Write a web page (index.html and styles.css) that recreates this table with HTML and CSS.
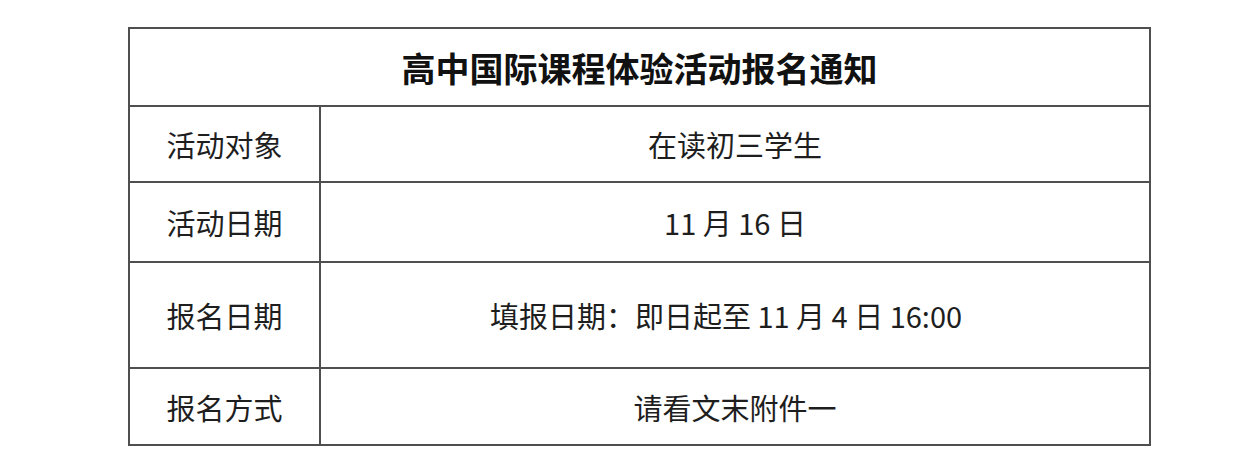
FILE: index.html
```html
<!DOCTYPE html>
<html lang="zh-CN">
<head>
<meta charset="utf-8">
<link rel="stylesheet" href="styles.css">
</head>
<body>
<table class="notice">
  <colgroup><col class="col-label"><col class="col-value"></colgroup>
  <tr class="row-title"><th colspan="2" class="title">高中国际课程体验活动报名通知</th></tr>
  <tr class="row-a"><td class="label">活动对象</td><td class="value">在读初三学生</td></tr>
  <tr class="row-b"><td class="label">活动日期</td><td class="value">11 月 16 日</td></tr>
  <tr class="row-c"><td class="label">报名日期</td><td class="value value-shift">填报日期：即日起至 11 月 4 日 16:00</td></tr>
  <tr class="row-d"><td class="label">报名方式</td><td class="value">请看文末附件一</td></tr>
</table>
</body>
</html>
```

FILE: styles.css
```css
html, body {
  margin: 0;
  padding: 0;
  background: #ffffff;
}
body {
  padding: 27px 0 0 128px;
  font-family: "Noto Sans CJK SC", "Noto Sans", sans-serif;
  color: #1e1e1e;
}
.notice {
  border-collapse: collapse;
  width: 1023px;
  table-layout: fixed;
}
.col-label { width: 191px; }
.notice th, .notice td {
  border: 2px solid #4f4f4f;
  padding: 0;
  text-align: center;
  vertical-align: middle;
}
.title {
  font-size: 34px;
  font-weight: 700;
  color: #111;
  height: 76px;
}
.label {
  font-size: 29px;
}
.value {
  font-size: 29px;
}
.notice td.value-shift {
  padding-right: 18px;
}
.row-a td { height: 74px; }
.row-b td { height: 78px; }
.row-c td { height: 104px; }
.row-d td { height: 75px; }
```
